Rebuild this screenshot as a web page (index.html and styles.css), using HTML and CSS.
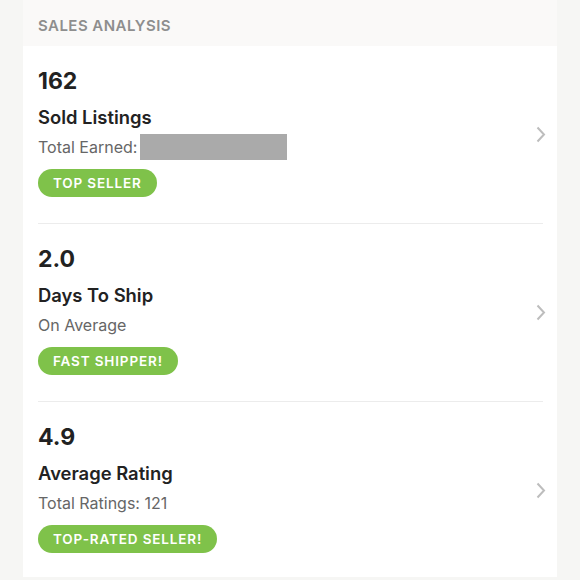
FILE: index.html
```html
<!DOCTYPE html>
<html>
<head>
<meta charset="utf-8">
<link rel="stylesheet" href="styles.css">
</head>
<body>
<div class="panel">
  <div class="header">SALES ANALYSIS</div>
  <div class="row">
    <div class="inner">
      <div class="info">
        <div class="num">162</div>
        <div class="title">Sold Listings</div>
        <div class="sub">Total Earned:<span class="mask"></span></div>
        <div class="badge">TOP SELLER</div>
      </div>
      <svg class="chev" width="10" height="17" viewBox="0 0 10 17"><polyline points="1.5,1.5 8,8.5 1.5,15.5" fill="none" stroke="#bdbdbd" stroke-width="2"/></svg>
    </div>
  </div>
  <div class="row">
    <div class="inner">
      <div class="info">
        <div class="num">2.0</div>
        <div class="title">Days To Ship</div>
        <div class="sub">On Average</div>
        <div class="badge">FAST SHIPPER!</div>
      </div>
      <svg class="chev" width="10" height="17" viewBox="0 0 10 17"><polyline points="1.5,1.5 8,8.5 1.5,15.5" fill="none" stroke="#bdbdbd" stroke-width="2"/></svg>
    </div>
  </div>
  <div class="row last">
    <div class="inner">
      <div class="info">
        <div class="num">4.9</div>
        <div class="title">Average Rating</div>
        <div class="sub">Total Ratings: 121</div>
        <div class="badge">TOP-RATED SELLER!</div>
      </div>
      <svg class="chev" width="10" height="17" viewBox="0 0 10 17"><polyline points="1.5,1.5 8,8.5 1.5,15.5" fill="none" stroke="#bdbdbd" stroke-width="2"/></svg>
    </div>
  </div>
</div>
</body>
</html>
```
FILE: styles.css
```css
html, body {
  margin: 0;
  padding: 0;
  background: #f6f6f4;
  font-family: Inter, "Open Sans", sans-serif;
}
.panel {
  margin-left: 23px;
  width: 534px;
  height: 577px;
  background: #ffffff;
}
.header {
  height: 46px;
  box-sizing: border-box;
  padding-left: 15px;
  line-height: 51px;
  background: #faf9f8;
  color: #8e8e8e;
  font-size: 15px;
  font-weight: 600;
  letter-spacing: 0.45px;
}
.row {
  padding: 0 14px 0 15px;
}
.inner {
  height: 177px;
  border-bottom: 1px solid #ececec;
  display: flex;
  align-items: center;
  justify-content: space-between;
}
.row.last .inner {
  border-bottom: none;
  height: 176px;
}
.info {
  align-self: flex-start;
  padding-top: 21px;
  display: flex;
  flex-direction: column;
  align-items: flex-start;
}
.num {
  font-size: 23px;
  line-height: 28px;
  font-weight: 700;
  color: #222;
}
.title {
  margin-top: 10px;
  font-size: 18.4px;
  line-height: 24px;
  font-weight: 600;
  color: #222;
}
.sub {
  margin-top: 5px;
  height: 26px;
  display: flex;
  align-items: center;
  font-size: 16px;
  line-height: 22px;
  color: #666;
}
.mask {
  display: inline-block;
  width: 147px;
  height: 26px;
  margin-left: 3px;
  background: #aaaaaa;
}
.badge {
  margin-top: 9px;
  height: 28px;
  line-height: 28px;
  padding: 0 15px;
  border-radius: 14px;
  background: #7fc24a;
  color: #fff;
  font-size: 13.5px;
  font-weight: 600;
  letter-spacing: 0.85px;
}
.chev {
  margin-right: -3px;
}
```
